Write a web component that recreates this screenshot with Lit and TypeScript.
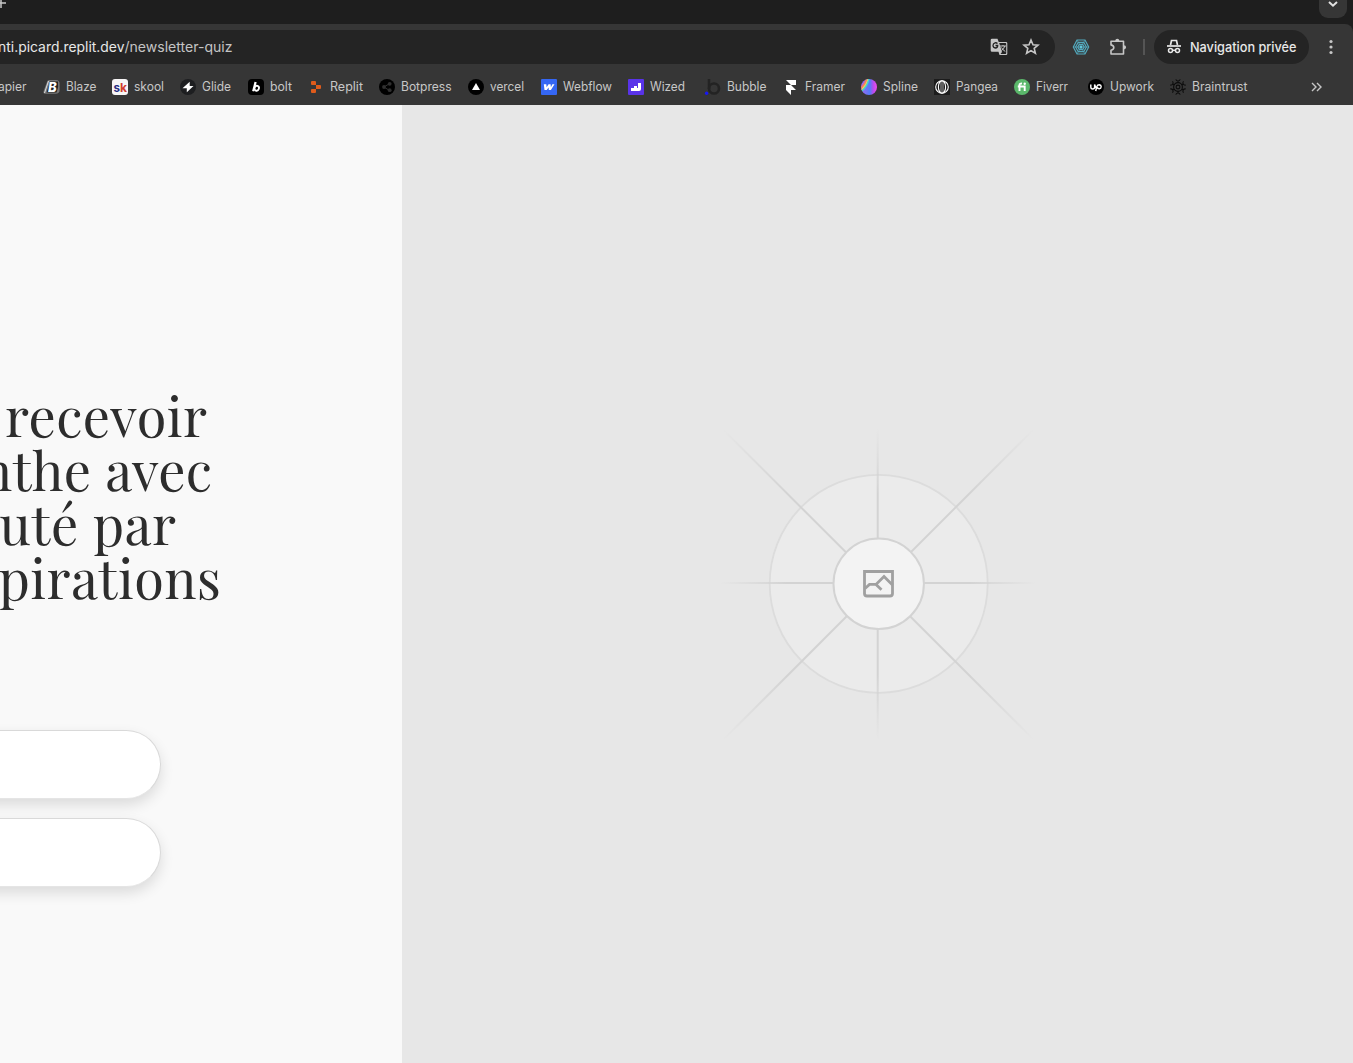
import { LitElement, html, svg, css, type SVGTemplateResult } from "lit";
import { customElement } from "lit/decorators.js";

interface Bookmark {
  label: string;
  width: number;
  icon: SVGTemplateResult;
  text: number;
}

const bookmarks: Bookmark[] = [
  { label: "Blaze", width: 68, text: 30.5, icon: svg`<path d="M5 1H12Q15.600 1 15.600 4.500V11Q15.600 14.800 11.500 14.800H1Q-1.500 14.800 0 11L3 3Q3.600 1 5 1Z" fill="#777"/><path d="M6 2.500H14Q15 8 12.500 13.500H2.500Z" fill="#222"/><path d="M4.500 2L.5 14" stroke="#ddd" fill="none"/><text x="4" y="12.800" font-size="13" font-weight="800" font-style="italic" fill="#fff">B</text>` },
  { label: "skool", width: 68, text: 30, icon: svg`<rect width="16" height="16" rx="3" fill="#f7f5f6"/><text x="1.400" y="12.600" font-size="12" font-weight="700" textLength="6.500" lengthAdjust="spacingAndGlyphs" fill="#292e83">s</text><text x="7.900" y="12.600" font-size="12" font-weight="700" textLength="7" lengthAdjust="spacingAndGlyphs" fill="#d23b2d">k</text>` },
  { label: "Glide", width: 68, text: 29, icon: svg`<circle cx="8" cy="8" r="8" fill="#1d1e20"/><path d="M9.700 2.800V7H13.500L6.800 13.300V9.200H2.500Z" fill="#fff"/>` },
  { label: "bolt", width: 60, text: 22, icon: svg`<rect width="16" height="16" rx="4" fill="#000"/><path d="M7.600 3L5.200 12.300" stroke="#fff" stroke-width="2.200"/><ellipse cx="8.700" cy="9.200" rx="2.200" ry="2.500" transform="rotate(20 8.700 9.200)" fill="none" stroke="#fff" stroke-width="1.900"/>` },
  { label: "Replit", width: 71, text: 33, icon: svg`<path d="M4 2H7Q8 2 8 3V6H4Q3 6 3 5V3Q3 2 4 2ZM8 6H12Q13 6 13 7V9Q13 10 12 10H8ZM3 11Q3 10 4 10H8V13Q8 14 7 14H4Q3 14 3 13Z" fill="#df5b1b"/>` },
  { label: "Botpress", width: 89, text: 50.5, icon: svg`<circle cx="8" cy="8" r="8" fill="#000"/><path d="M5 8L10 4.900M5 8L10 11.200" stroke="#333" fill="none"/><g fill="#303030"><circle cx="5" cy="8" r="1.900"/><circle cx="10.700" cy="4.800" r="1.900"/><circle cx="10.700" cy="11.200" r="1.900"/></g>` },
  { label: "vercel", width: 73, text: 34, icon: svg`<circle cx="8" cy="8" r="8" fill="#000"/><path d="M8 4L12 11H4Z" fill="#fff"/>` },
  { label: "Webflow", width: 87, text: 49, icon: svg`<rect width="16" height="16" rx="1" fill="#3567f4"/><path d="M2.800 5.200H5.300L5.600 8.300L7.600 5.200H9.600L9.900 8.200L11.400 5.200H13.500L9.900 11H7.800L7.600 8.600L5.700 11H3.500Z" fill="#fff"/>` },
  { label: "Wized", width: 77, text: 35, icon: svg`<rect width="16" height="16" rx="1" fill="#5933e9"/><path d="M10 4H13V10Q13 12 11 12H3V9H6V7H9V9H10Z" fill="#fff"/>` },
  { label: "Bubble", width: 78, text: 39.5, icon: svg`<path d="M4 0V10" stroke="#232323" stroke-width="2.500"/><circle cx="9" cy="9.500" r="5" fill="none" stroke="#232323" stroke-width="2.600"/><circle cx="1.600" cy="14.300" r="1.700" fill="#1717f5"/>` },
  { label: "Framer", width: 78, text: 40, icon: svg`<path d="M3 1H13V6H8L13 11H8V16L3 11V6H8Z" fill="#fff"/>` },
  { label: "Spline", width: 73, text: 35, icon: svg`<defs><clipPath id="ball"><circle cx="8" cy="8" r="8"/></clipPath><linearGradient id="hue"><stop stop-color="#a066f0"/><stop offset=".55" stop-color="#527cf8"/><stop offset=".75" stop-color="#b34df0"/><stop offset="1" stop-color="#f24bea"/></linearGradient></defs><g clip-path="url(#ball)" fill="none"><rect width="16" height="16" fill="url(#hue)"/><path d="M0 9Q5 5 5.500-1" stroke="#f57867" stroke-width="2"/><path d="M0 11Q6 6 7-1" stroke="#f4dc4e" stroke-width="1.200"/><path d="M0 13Q7 7 8-1" stroke="#41dcc7" stroke-width="1.300"/></g>` },
  { label: "Pangea", width: 80, text: 42, icon: svg`<rect width="16" height="16" fill="#1c1c1c"/><g fill="none" stroke="#fff" stroke-width="1.100"><circle cx="8" cy="8" r="6.300"/><ellipse cx="8" cy="8" rx="3.600" ry="6.200"/><path d="M7 2V14M9 2V14" stroke-width=".6"/></g>` },
  { label: "Fiverr", width: 74, text: 32, icon: svg`<circle cx="8" cy="8" r="8" fill="#5bb86b"/><path d="M5.500 12V6Q5.500 4.300 8 4.500M3.800 7.500H10.700V12" fill="none" stroke="#fff" stroke-width="1.900"/><circle cx="10.700" cy="4.700" r="1.200" fill="#fff"/>` },
  { label: "Upwork", width: 82, text: 44, icon: svg`<circle cx="8" cy="8" r="8" fill="#000"/><path d="M2.800 5.500V8Q2.800 10 4.700 10Q6.600 10 6.600 8V5.500Q7.400 8.500 9 9.700M7.700 12L8.800 7.600Q9.400 5.700 11.300 5.700Q13.200 5.900 13.200 7.700Q13 9.600 11.200 9.700Q9.800 9.600 8.600 8" fill="none" stroke="#fff" stroke-width="1.400"/>` },
  { label: "Braintrust", width: 90, text: 55.5, icon: svg`<g fill="none" stroke="#0c0c0c" stroke-width="1.100"><circle cx="8" cy="8" r="1.900"/><circle cx="8" cy="8" r="4.400"/>${[0, 60, 120, 180, 240, 300].map((a) => svg`<path d="M8 3.600V2M5.800 .4Q6.500 2 8 2T10.200 .4" transform="rotate(${a} 8 8)"/>`)}</g>` },
];

@customElement("bookmark-bar")
class BookmarkBar extends LitElement {
  static styles = css`
    :host { display: flex; height: 36px; align-items: center; overflow: hidden; color: #c7c7c7; font: 12px Inter, "Liberation Sans", sans-serif; }
    .cut { display: flex; width: 44px; flex: none; }
    .cut .label { margin-left: -2px; }
    .item { display: flex; align-items: center; gap: 5.6px; flex: none; }
    .icon { width: 16px; height: 16px; flex: none; overflow: visible; }
    .label { height: 18px; flex: none; overflow: visible; fill: #c7c7c7; font-size: 12.500px; }
    .more { width: 12px; height: 12px; margin-left: 51px; flex: none; }
  `;
  private label(text: string, width: number) {
    return html`<svg class="label" width=${width} height="18"><text x="0" y="13.300" textLength=${width} lengthAdjust="spacingAndGlyphs">${text}</text></svg>`;
  }
  render() {
    return html`
      <div class="cut">${this.label("apier", 28.5)}</div>
      ${bookmarks.map((b) => html`<div class="item" style="width:${b.width}px"><svg class="icon" viewBox="0 0 16 16">${b.icon}</svg>${this.label(b.label, b.text)}</div>`)}
      <svg class="more" viewBox="0 0 12 12" fill="none" stroke="#c7c7c7" stroke-width="1.400"><path d="M1 2L5 6L1 10M6 2L10 6L6 10"/></svg>
    `;
  }
}

@customElement("browser-chrome")
class BrowserChrome extends LitElement {
  static styles = css`
    :host { display: block; height: 105px; background: #1e1e1e; font-family: Inter, "Liberation Sans", sans-serif; overflow: hidden; }
    .tabs { height: 24px; display: flex; justify-content: space-between; }
    .plus { width: 8px; height: 9px; }
    .chevron { width: 28px; height: 18px; margin-right: 6px; border-radius: 0 0 9px 9px; background: #363636; }
    .toolbar { background: #363636; border-top-right-radius: 8px; height: 81px; }
    .row { height: 45px; display: flex; align-items: center; }
    .address { box-sizing: border-box; width: 1055px; height: 34px; border-radius: 0 17px 17px 0; background: #242424; display: flex; align-items: center; padding-right: 15px; }
    .url { width: 260px; height: 22px; flex: none; font-size: 14px; }
    .host { fill: #e8e8e8; }
    .path { fill: #c4c4c4; }
    .glyph { width: 18px; height: 18px; flex: none; }
    .translate { margin-left: 730px; }
    .star { margin-left: 14px; }
    .web { margin-left: 17px; }
    .puzzle { margin-left: 19px; overflow: visible; }
    .rule { width: 2px; height: 16px; background: #555; margin-left: 16px; }
    .private { width: 155px; height: 34px; border-radius: 17px; margin-left: 9px; background: #242424; display: flex; align-items: center; flex: none; }
    .private .glyph { margin-left: 11px; }
    .name { width: 107px; height: 20px; margin-left: 7px; overflow: visible; fill: #e8e8e8; font-size: 13px; font-weight: 500; }
    .dots { margin-left: 13px; }
  `;
  render() {
    return html`
      <div class="tabs">
        <svg class="plus" viewBox="0 0 8 9"><path d="M0 3H6M1 0V8" stroke="#c7c7c7" stroke-width="1.500"/></svg>
        <svg class="chevron" viewBox="0 0 28 18"><path d="M10 2L14 5.700L18 2" fill="none" stroke="#e3e3e3" stroke-width="2"/></svg>
      </div>
      <div class="toolbar">
        <div class="row">
          <div class="address">
            <svg class="url"><text class="host" x="-2" y="16" textLength="126.500" lengthAdjust="spacingAndGlyphs">nti.picard.replit.dev</text><text class="path" x="124.500" y="16" textLength="108" lengthAdjust="spacingAndGlyphs">/newsletter-quiz</text></svg>
            <svg class="glyph translate" viewBox="0 0 18 18"><path d="M2 .8H7.500L8.700 4H16Q17.300 4 17.300 5.300V16Q17.300 17 16 17H9.500L8.500 13.800H2Q.7 13.800.7 12.500V2Q.7.8 2 .8Z" fill="#c7c7c7"/><path d="M9.200 5H15.500Q16.200 5 16.200 5.700V15.300Q16.200 16 15.500 16H10.500L12 14L10.500 9Z" fill="#242424"/><path d="M7.500 5.500Q6.500 4.500 5 4.800Q3 5.300 3 7.500Q3.200 9.800 5.300 10Q7.800 9.800 7.700 7.500H5.500" fill="none" stroke="#242424" stroke-width="1.300"/><path d="M10 8H16M13 7V8M14.800 8Q14 11 11.500 12.500M11.500 9.500Q12.800 12 15.300 13.500" fill="none" stroke="#c7c7c7"/></svg>
            <svg class="glyph star" viewBox="0 0 18 18"><path d="M9 2L11 6.700L16 7.100L12.200 10.400L13.400 15.300L9 12.600L4.600 15.300L5.800 10.400L2 7.100L7 6.700Z" fill="none" stroke="#c7c7c7" stroke-width="1.600"/></svg>
          </div>
          <svg class="glyph web" viewBox="0 0 18 18"><g fill="none" stroke="#53a9bd" stroke-width="1.200"><path d="M5 2H13L16.700 9L13 16H5L1.300 9Z"/><path d="M6.200 4.300H11.800L14.400 9L11.800 13.700H6.200L3.600 9Z"/><path d="M7.300 6.400H10.700L12.200 9L10.700 11.600H7.300L5.800 9Z"/><path d="M1 9H17M5 2L13 16M13 2L5 16" stroke-width=".7"/></g><circle cx="9" cy="9" r="1.500" fill="#62c7dc"/></svg>
          <svg class="glyph puzzle" viewBox="0 0 18 18"><path d="M2 3.200H14.500V16H2V12.300Q4.800 11.700 4.800 9.600T2 6.900Z" fill="none" stroke="#c7c7c7" stroke-width="1.600" stroke-linejoin="round"/><path d="M6.200 3Q6.400 .7 8.300 .7T10.400 3ZM14.800 7.200Q17.100 7.400 17.100 9.300T14.800 11.400Z" fill="#c7c7c7"/></svg>
          <div class="rule"></div>
          <div class="private">
            <svg class="glyph" viewBox="0 0 18 18"><path d="M5.500 7L6.500 2.500H11.500L12.500 7" fill="none" stroke="#e8e8e8" stroke-width="1.700"/><path d="M2 8H16" stroke="#e8e8e8" stroke-width="1.700"/><g fill="none" stroke="#e8e8e8" stroke-width="1.500"><circle cx="5.500" cy="12.500" r="2"/><circle cx="12.500" cy="12.500" r="2"/><path d="M7.500 12.300H10.500"/></g></svg>
            <svg class="name"><text x="0" y="15" textLength="106.500" lengthAdjust="spacingAndGlyphs">Navigation privée</text></svg>
          </div>
          <svg class="glyph dots" viewBox="0 0 18 18" fill="#c7c7c7"><circle cx="9" cy="3.500" r="1.600"/><circle cx="9" cy="9" r="1.600"/><circle cx="9" cy="14.500" r="1.600"/></svg>
        </div>
        <bookmark-bar></bookmark-bar>
      </div>
    `;
  }
}

@customElement("image-placeholder")
class ImagePlaceholder extends LitElement {
  static styles = css`
    :host { display: block; width: 320px; height: 320px; }
    .art { display: block; width: 320px; height: 320px; }
  `;
  render() {
    const spokes = [
      [0, 158, 316, 158.01],
      [157.7, 3, 157.71, 315],
      [3, 4.5, 314, 315],
      [314, 4, 3, 315],
    ];
    return html`<svg class="art" viewBox="-2 -1 320 320" fill="none">
      <defs>${spokes.map(([x1, y1, x2, y2], i) => svg`<linearGradient id="fade${i}" gradientUnits="userSpaceOnUse" x1=${x1} y1=${y1} x2=${x2} y2=${y2}><stop stop-color="#d3d3d3" stop-opacity="0"/><stop offset=".21" stop-color="#d3d3d3"/><stop offset=".79" stop-color="#d3d3d3"/><stop offset="1" stop-color="#d3d3d3" stop-opacity="0"/></linearGradient>`)}</defs>
      <circle cx="158.700" cy="158.800" r="109" fill="#ebebeb" stroke="#dcdcdc" stroke-width="1.800"/>
      ${spokes.map(([x1, y1, x2, y2], i) => svg`<path d="M${x1} ${y1}L${x2} ${y2}" stroke="url(#fade${i})" stroke-width="2"/>`)}
      <circle cx="158.700" cy="158.800" r="45.200" fill="#f3f3f3" stroke="#d3d3d3" stroke-width="2"/>
      <g stroke="#a0a0a0" stroke-width="2.800"><path d="M144.500 146.500H172.500V168.500Q172.500 171 170 171H147Q144.500 171 144.500 168.500Z"/><path d="M145 163.500L149.500 159.400H156L164 151.500L172.500 160M156 159.400L161.500 164.800"/></g>
    </svg>`;
  }
}

@customElement("app-root")
class AppRoot extends LitElement {
  static styles = css`
    :host { display: block; width: 1353px; height: 1063px; overflow: hidden; }
    .page { display: flex; height: 958px; }
    .form { box-sizing: border-box; width: 402px; flex: none; background: #f9f9f9; padding-top: 285px; overflow: hidden; }
    .title { margin: 0; width: 402px; height: 216px; font-weight: 400; }
    .line { display: block; width: 402px; height: 54px; overflow: visible; fill: #2d2d2d; font: 54px "Playfair Display", "Liberation Serif", serif; }
    .choices { display: flex; flex-direction: column; gap: 19px; margin-top: 124px; }
    .choice { box-sizing: border-box; width: 201px; height: 69px; margin-left: -40px; border: 1px solid #d9d9d9; border-bottom-color: #e5e5e5; border-radius: 35px; background: #fff; box-shadow: 0 6px 14px rgba(0, 0, 0, 0.12); }
    .visual { flex: 1; display: flex; align-items: center; justify-content: center; background: #e7e7e7; }
  `;
  render() {
    const lines: [string, number, number][] = [
      ["recevoir", 5, 202],
      ["nthe avec", -20, 232],
      ["uté par", -0.5, 176.5],
      ["pirations", -1.5, 222.5],
    ];
    return html`
      <browser-chrome></browser-chrome>
      <main class="page">
        <section class="form">
          <h1 class="title">${lines.map(([t, x, w]) => html`<svg class="line"><text x=${x} y="48" textLength=${w}>${t}</text></svg>`)}</h1>
          <div class="choices"><div class="choice"></div><div class="choice"></div></div>
        </section>
        <section class="visual"><image-placeholder></image-placeholder></section>
      </main>
    `;
  }
}
